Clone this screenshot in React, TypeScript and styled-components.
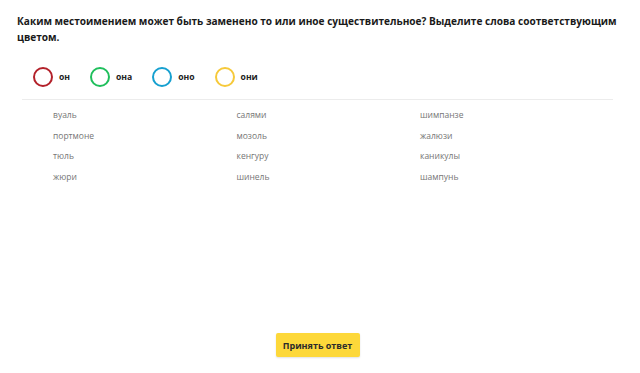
import React from "react";
import styled, { createGlobalStyle } from "styled-components";

const GlobalStyle = createGlobalStyle`
  html, body {
    margin: 0;
    padding: 0;
    background: #ffffff;
  }
  body {
    font-family: "Open Sans", "Liberation Sans", sans-serif;
  }
`;

const Page = styled.div`
  display: flex;
  flex-direction: column;
  box-sizing: border-box;
  height: 373px;
  padding: 13px 6px 16px 17px;
`;

const Title = styled.h1`
  margin: 0;
  font-size: 10.1px;
  font-weight: 700;
  line-height: 16px;
  color: #1a1a1a;
`;

const Body = styled.div`
  display: flex;
  flex-direction: column;
  flex: 1;
  margin: 0 21px 0 5px;
`;

const Legend = styled.div`
  display: flex;
  align-items: center;
  padding: 22px 0 12px 11px;
  border-bottom: 1px solid #ececec;
`;

const LegendItem = styled.div`
  display: flex;
  align-items: center;
  gap: 6px;
  margin-right: 20px;
`;

const Ring = styled.span<{ $color: string }>`
  display: block;
  box-sizing: border-box;
  width: 20px;
  height: 20px;
  border-radius: 50%;
  border: 2.5px solid ${(p) => p.$color};
`;

const LegendLabel = styled.span`
  font-size: 8.6px;
  font-weight: 700;
  color: #222;
`;

const Words = styled.div`
  display: grid;
  grid-template-columns: repeat(3, 183.5px);
  grid-auto-rows: 20.7px;
  align-items: center;
  padding: 4px 0 0 31px;
`;

const Word = styled.span`
  font-size: 8.5px;
  color: #767676;
`;

const Footer = styled.div`
  display: flex;
  justify-content: center;
  margin-top: auto;
`;

const SubmitButton = styled.button`
  width: 84px;
  height: 24px;
  border: none;
  border-radius: 2px;
  background: #fdd83a;
  box-shadow: 0 1px 2px rgba(0, 0, 0, 0.12);
  font-family: "Open Sans", "Liberation Sans", sans-serif;
  font-size: 9px;
  font-weight: 700;
  color: #2b2b2b;
  cursor: pointer;
`;

const pronouns = [
  { label: "он", color: "#b3212a" },
  { label: "она", color: "#1fbf5c" },
  { label: "оно", color: "#16a0d0" },
  { label: "они", color: "#f6c93a" },
];

const words = [
  "вуаль", "салями", "шимпанзе",
  "портмоне", "мозоль", "жалюзи",
  "тюль", "кенгуру", "каникулы",
  "жюри", "шинель", "шампунь",
];

export default function App() {
  return (
    <>
      <GlobalStyle />
      <Page>
        <Title>
          Каким местоимением может быть заменено то или иное существительное? Выделите слова
          соответствующим цветом.
        </Title>
        <Body>
          <Legend>
            {pronouns.map((p) => (
              <LegendItem key={p.label}>
                <Ring $color={p.color} />
                <LegendLabel>{p.label}</LegendLabel>
              </LegendItem>
            ))}
          </Legend>
          <Words>
            {words.map((w) => (
              <Word key={w}>{w}</Word>
            ))}
          </Words>
          <Footer>
            <SubmitButton>Принять ответ</SubmitButton>
          </Footer>
        </Body>
      </Page>
    </>
  );
}
